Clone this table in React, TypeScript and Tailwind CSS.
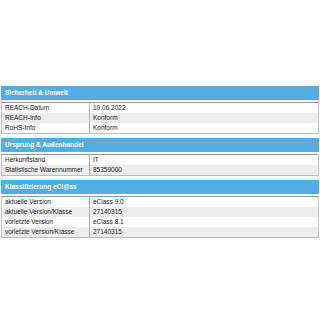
import React from 'react';

type Row = [string, string];

const sections: { title: string; rows: Row[] }[] = [
  {
    title: 'Sicherheit & Umwelt',
    rows: [
      ['REACH-Datum', '10.06.2022'],
      ['REACH-Info', 'Konform'],
      ['RoHS-Info', 'Konform'],
    ],
  },
  {
    title: 'Ursprung & Außenhandel',
    rows: [
      ['Herkunftsland', 'IT'],
      ['Statistische Warennummer', '85359000'],
    ],
  },
  {
    title: 'Klassifizierung eCl@ss',
    rows: [
      ['aktuelle Version', 'eClass 9.0'],
      ['aktuelle Version/Klasse', '27140315'],
      ['vorletzte Version', 'eClass 8.1'],
      ['vorletzte Version/Klasse', '27140315'],
    ],
  },
];

const Section: React.FC<{ title: string; rows: Row[] }> = ({ title, rows }) => {
  return (
    <div className="flex flex-col">
      <div className="h-[14px] bg-[#55ade6] pl-[4px] text-[6.5px] font-bold leading-[14px] text-white">
        {title}
      </div>
      <div className="mt-[2px] border border-t-[#999999] border-x-[#c8c8c8] border-b-[#bdbdbd]">
        {rows.map(([label, value], i) => (
          <div key={label} className={`flex h-[10px] leading-[10px] text-[6.5px] text-[#1a1a1a] ${i % 2 === 1 ? 'bg-[#ededed]' : 'bg-white'}`}>
            <div className="w-[88px] shrink-0 border-r border-[#b5b5b5] pl-[3px]">{label}</div>
            <div className="pl-[3px]">{value}</div>
          </div>
        ))}
      </div>
    </div>
  );
};

export default function App() {
  return (
    <div className="h-[320px] w-[320px] bg-white pt-[86px] pl-[1px] pr-[1px]" style={{ fontFamily: '"Liberation Sans", Arial, sans-serif' }}>
      <div className="flex flex-col gap-[4px]">
        {sections.map((s) => (
          <Section key={s.title} title={s.title} rows={s.rows} />
        ))}
      </div>
    </div>
  );
}
